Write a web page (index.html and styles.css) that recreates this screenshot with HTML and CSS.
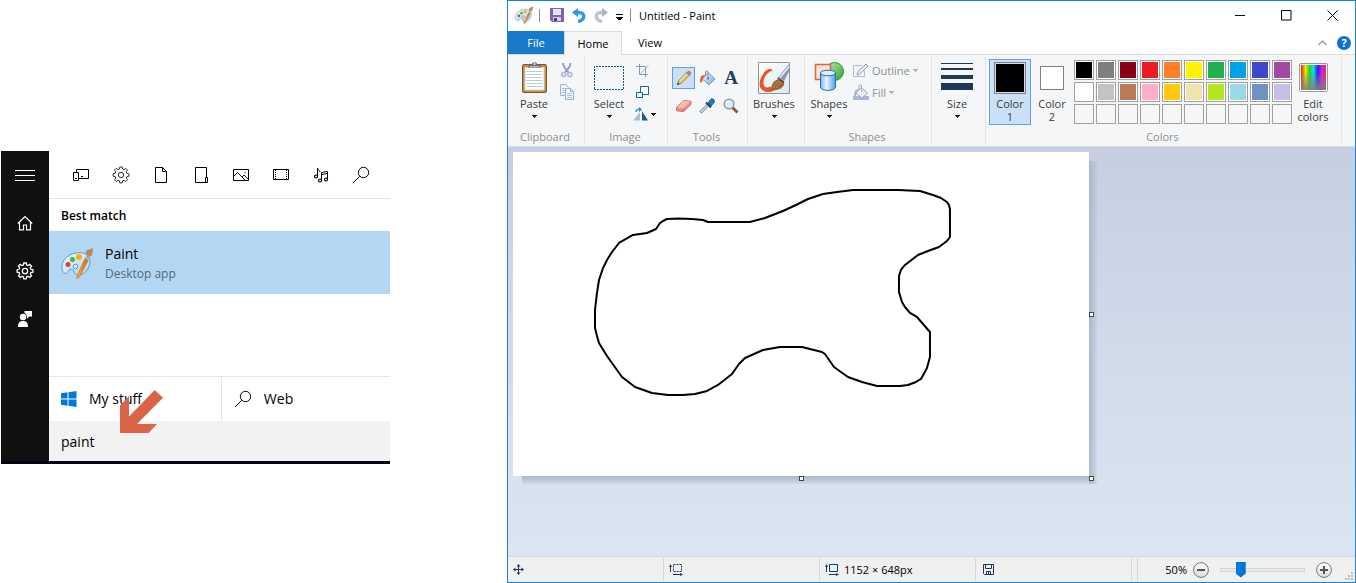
FILE: index.html
```html
<!DOCTYPE html>
<html lang="en">
<head>
<meta charset="utf-8">
<title>Untitled - Paint</title>
<link rel="stylesheet" href="styles.css">
</head>
<body>
<svg class="defs" aria-hidden="true">
  <defs>
    <linearGradient id="wood" x1="0" y1="0" x2="1" y2="0"><stop offset="0" stop-color="#ffa947"/><stop offset="1" stop-color="#d96b0c"/></linearGradient>
    <linearGradient id="pal" x1="0" y1="0" x2="1" y2="1"><stop offset="0" stop-color="#eef9ff"/><stop offset="1" stop-color="#a9d4f3"/></linearGradient>
    <linearGradient id="cyl" x1="0" y1="0" x2="1" y2="0"><stop offset="0" stop-color="#7ab8f0"/><stop offset=".4" stop-color="#e8f5ff"/><stop offset="1" stop-color="#4f9de4"/></linearGradient>
    <linearGradient id="green" x1="0" y1="0" x2="1" y2="1"><stop offset="0" stop-color="#c2ecb5"/><stop offset="1" stop-color="#27a02b"/></linearGradient>
    <linearGradient id="rainbow" x1="0" y1="0" x2="1" y2="0"><stop offset="0" stop-color="#f31a1a"/><stop offset=".18" stop-color="#f8e400"/><stop offset=".34" stop-color="#12dd1c"/><stop offset=".5" stop-color="#14dce8"/><stop offset=".67" stop-color="#2020ee"/><stop offset=".85" stop-color="#e818dd"/><stop offset="1" stop-color="#f0204a"/></linearGradient>
    <linearGradient id="fade" x1="0" y1="0" x2="0" y2="1"><stop offset=".25" stop-color="#808080" stop-opacity="0"/><stop offset="1" stop-color="#808080" stop-opacity=".9"/></linearGradient>
    <linearGradient id="bucket" x1="0" y1="0" x2="1" y2="1"><stop offset="0" stop-color="#fff"/><stop offset="1" stop-color="#6ba4d8"/></linearGradient>
    <linearGradient id="tile" x1="0" y1="0" x2="1" y2="1"><stop offset="0" stop-color="#fff"/><stop offset="1" stop-color="#d9e9f4"/></linearGradient>
    <linearGradient id="knob" x1="0" y1="0" x2="0" y2="1"><stop offset="0" stop-color="#fff"/><stop offset="1" stop-color="#dcdcdc"/></linearGradient>
  </defs>
  <symbol id="gear" viewBox="0 0 18 18">
    <path d="M7.800 1h2.400l.4 2 1.400.6 1.800-1.200 1.700 1.700-1.200 1.800.6 1.400 2 .5v2.400l-2 .4-.6 1.400 1.200 1.800-1.700 1.700-1.800-1.200-1.400.6-.4 2H7.800l-.4-2-1.400-.6-1.800 1.200-1.700-1.700L3.700 12l-.6-1.400-2-.4V7.800l2-.5.6-1.400L2.500 4.100l1.700-1.700L6 3.600 7.400 3z" fill="none" stroke="currentColor"/>
    <circle cx="9" cy="9" r="2.700" fill="none" stroke="currentColor"/>
  </symbol>
  <symbol id="search" viewBox="0 0 18 18">
    <circle cx="11.500" cy="6.500" r="5.200" fill="none" stroke="currentColor"/>
    <path d="M7.700 10.300 1 17" fill="none" stroke="currentColor"/>
  </symbol>
  <symbol id="palette" viewBox="0 0 32 32">
    <path d="M1 22C0 14 6 7.500 15 6c8-1.500 14 2 14 8 0 8-6 14-12 14-5 0-3-6-7-6-3 0-3 5-5.500 4.500C2.500 26 1.300 24 1 22z" fill="url(#pal)" stroke="#5d9fc9"/>
    <circle cx="7" cy="17.500" r="2.500" fill="#e53d2d"/><circle cx="11.500" cy="12.500" r="2.500" fill="#4eb239"/><circle cx="18" cy="10" r="3" fill="#ffab12"/><circle cx="14.500" cy="19.500" r="2.300" fill="#d9edfb" stroke="#5296cc"/>
    <path d="M24 11.500 27 13.500 18.500 30 15.800 31.500 16.300 28z" fill="url(#wood)" stroke="#c6691b" stroke-width=".6"/>
    <path d="m24.300 11 1.600-3 3.600 1.700-2.300 3.300z" fill="#8db4c8"/>
    <path d="M25.300 8c-1.500-3 0-5 2.500-5.500L32 1c-.500 4.500 0 7-3 8.500z" fill="#b58a5e"/>
  </symbol>
  <symbol id="down" viewBox="0 0 5 3"><path d="M0 0h5v1H4v1H3v1H2V2H1V1H0z" fill="currentColor"/></symbol>
</svg>

<main class="desktop">
  <section class="start" aria-label="Search">
    <div class="start-main">
      <nav class="rail" aria-label="Start">
        <button type="button" aria-label="Menu"><svg width="20" height="12" viewBox="0 0 20 12"><path d="M0 1.500h20M0 6.500h20M0 11.500h20" stroke="currentColor"/></svg></button>
        <button type="button" aria-label="Home"><svg width="16" height="16" viewBox="0 0 16 16"><path d="M.8 8.500 8 1.500l7.200 7M2.500 7.500v7.300h4V10h3v4.800h4V7.500" fill="none" stroke="currentColor" stroke-width="1.200"/></svg></button>
        <button type="button" aria-label="Settings"><svg class="bold" width="18" height="18"><use href="#gear"/></svg></button>
        <button type="button" aria-label="Feedback"><svg width="16" height="16" viewBox="0 0 16 16" fill="currentColor"><circle cx="6" cy="6" r="3.200"/><path d="M1 16c0-4 1.500-6 5-6s5 2 5 6zM7.500 0H15v5.500h-3L10 8V5.500h-.3C9.500 3.500 8.800 2.500 7.500 2z"/></svg></button>
      </nav>
      <div class="panel">
        <div class="filters">
          <button type="button" aria-label="Apps"><svg width="18" height="14" viewBox="0 0 18 14"><path d="M4.500 4V1.500h12v9H6.500M1.500 4.500h5v8h-5zM3 10.500h2M9 8.500h2" fill="none" stroke="currentColor"/></svg></button>
          <button type="button" aria-label="Settings"><svg class="light" width="18" height="18"><use href="#gear"/></svg></button>
          <button type="button" aria-label="Documents"><svg width="14" height="16" viewBox="0 0 14 16"><path d="M1.500.5h7l4 4v11h-11zM8.500.5v4h4" fill="none" stroke="currentColor"/></svg></button>
          <button type="button" aria-label="Folders"><svg width="14" height="18" viewBox="0 0 14 18"><path d="M12.500 11V1.500h-11v15h10.500M11.500 11.500h2v5h-2z" fill="none" stroke="currentColor"/></svg></button>
          <button type="button" aria-label="Photos"><svg width="18" height="14" viewBox="0 0 18 14"><path d="M1.500 1.500h15v11h-15z" fill="none" stroke="currentColor"/><path d="m2 8 3.500-3.500 8 8M10 9l2-2 4.500 4.500M12.500 4.500h1" fill="none" stroke="currentColor" stroke-width=".9"/></svg></button>
          <button type="button" aria-label="Videos"><svg width="18" height="14" viewBox="0 0 18 14"><path d="M1.500 1.500h15v10h-15z" fill="none" stroke="currentColor"/><path d="M3.500 2v10M14.500 2v10" stroke="currentColor" stroke-dasharray="1 1"/></svg></button>
          <button type="button" aria-label="Music"><svg width="16" height="16" viewBox="0 0 16 16"><path d="M4.500 9.500V1c0 2 2.500 2 2.500 4M8.500 13V5.500l6-1V12M8.500 7.500l6-1" fill="none" stroke="currentColor"/><g fill="none" stroke="currentColor" stroke-width="1.200"><circle cx="3" cy="9.500" r="1.500"/><circle cx="7" cy="13.500" r="1.500"/><circle cx="13" cy="12.500" r="1.500"/></g></svg></button>
          <button type="button" aria-label="Web search"><svg width="18" height="18"><use href="#search"/></svg></button>
        </div>
        <h2 class="best">Best match</h2>
        <button type="button" class="result">
          <svg width="32" height="32"><use href="#palette"/></svg>
          <span class="result-text"><span>Paint</span><small>Desktop app</small></span>
        </button>
        <div class="scopes">
          <button type="button" class="mine"><svg width="16" height="16" viewBox="0 0 16 16" fill="#0078d7"><path d="M0 2.300 6.500 1.300V7.500H0zM7.500 1.200 15.500 0v7.500h-8zM0 8.500h6.500v6.200L0 13.700zM7.500 8.500h8V16l-8-1.200z"/></svg>My stuff</button>
          <button type="button"><svg width="18" height="18"><use href="#search"/></svg>Web</button>
        </div>
        <input class="query" type="text" value="paint" aria-label="Search text">
        <svg class="pointer" width="43" height="43" viewBox="0 0 43 43" aria-hidden="true"><path d="M0 15.500 9 6v20.500L34.700 0 43 7.800 17 34h20l-8.500 9H0z" fill="#da6446"/></svg>
      </div>
    </div>
    <div class="taskbar"></div>
  </section>

  <section class="paint" aria-label="Paint">
    <header class="titlebar">
      <svg width="18" height="18"><use href="#palette"/></svg>
      <i class="bar"></i>
      <button type="button" aria-label="Save"><svg width="14" height="14" viewBox="0 0 14 14"><path d="M0 0h14v14H2L0 12z" fill="#7f62b0"/><path d="M3 1h8v6H3z" fill="#f4f2f8"/><path d="M3 3h8M3 5h8" stroke="#d8d0e6"/><path d="M3 9h8v4H3z" fill="#d8d0e6"/><path d="M4 10h3v3H4z" fill="#4f387c"/></svg></button>
      <button type="button" aria-label="Undo"><svg width="14" height="15" viewBox="0 0 14 15"><path d="M2 4.500h5c6.500 0 6.500 7.500-1 9" fill="none" stroke="#2b9be6" stroke-width="3.400"/><path d="M0 4.500 6 0v9z" fill="#2b9be6"/></svg></button>
      <button type="button" aria-label="Redo"><svg width="14" height="15" viewBox="0 0 14 15"><path d="M12 4.500H7c-6.500 0-6.500 7.500 1 9" fill="none" stroke="#b9c3d5" stroke-width="3.400"/><path d="M14 4.500 8 0v9z" fill="#a8b4ca"/></svg></button>
      <button type="button" class="customize" aria-label="Customize toolbar"><svg width="7" height="6" viewBox="0 0 7 6"><path d="M0 0h7v1H0zM0 3h7v1H6v1H5v1H2V5H1V4H0z"/></svg></button>
      <i class="bar"></i>
      <h1>Untitled - Paint</h1>
      <div class="controls">
        <button type="button" aria-label="Minimize"><svg width="11" height="11" viewBox="0 0 11 11"><path d="M0 5.500h10" stroke="#000"/></svg></button>
        <button type="button" aria-label="Maximize"><svg width="11" height="11" viewBox="0 0 11 11"><path d="M.5.5h9.500v9.500H.5z" fill="none" stroke="#000"/></svg></button>
        <button type="button" aria-label="Close"><svg width="11" height="11" viewBox="0 0 11 11"><path d="m.5.5 10 10m0-10-10 10" stroke="#000"/></svg></button>
      </div>
    </header>
    <nav class="tabs">
      <button type="button" class="file">File</button>
      <button type="button" class="home">Home</button>
      <button type="button" class="view">View</button>
      <button type="button" class="collapse" aria-label="Collapse ribbon"><svg width="9" height="6" viewBox="0 0 9 6"><path d="M.5 5 4.500 1l4 4" fill="none" stroke="#9a9a9a" stroke-width="1.300"/></svg></button>
      <button type="button" class="help" aria-label="Help">?</button>
    </nav>

    <div class="ribbon">
      <section class="group clipboard">
        <div class="tools">
          <button type="button" class="big"><svg width="32" height="32" viewBox="0 0 32 32"><rect x="4.500" y="2.500" width="24" height="28" rx="1.500" fill="#c58c48" stroke="#80572b"/><path d="M7 5.500h19V28H7z" fill="#fff" stroke="#dbd5cc"/><path d="M8.500 9.500h16M8.500 12.500h16M8.500 15.500h16M8.500 18.500h16M8.500 21.500h16M8.500 24.500h16" stroke="#b9cade"/><path d="M9.500 5.500 11 3.500l2.500-1c1-3 5-3 6 0l2.500 1 1.500 2z" fill="#6c6c6c"/><path d="M12 4.500h9" stroke="#b7b7b7"/><circle cx="16.500" cy="2" r="1" fill="#f3f3f3"/></svg><span>Paste</span><svg class="arrow"><use href="#down"/></svg></button>
          <div class="stack">
            <button type="button" aria-label="Cut"><svg width="14" height="16" viewBox="0 0 14 16"><path d="M3 1c0 4 3 6 5.500 9.500M10.500 1c0 4-3 6-5.500 9.500" fill="none" stroke="#8b9cb6" stroke-width="1.700"/><circle cx="3.700" cy="12.500" r="2" fill="none" stroke="#a6b7d4" stroke-width="1.600"/><circle cx="9.800" cy="12.500" r="2" fill="none" stroke="#a6b7d4" stroke-width="1.600"/></svg></button>
            <button type="button" aria-label="Copy"><svg width="16" height="16" viewBox="0 0 16 16"><path d="M1.500.5h5l3 3v8h-8z" fill="#f2f6fc" stroke="#9eb1d0"/><path d="M3 4.500h3M3 6.500h4M3 8.500h4" stroke="#b5c4dc"/><path d="M6.500 4.500h5l3 3v8h-8zM11.500 4.500v3h3" fill="#f2f6fc" stroke="#9eb1d0"/><path d="M8 9.500h5M8 11.500h5M8 13.500h5" stroke="#aebfd9"/></svg></button>
          </div>
        </div>
        <h3>Clipboard</h3>
      </section>

      <section class="group image">
        <div class="tools">
          <button type="button" class="big"><svg width="32" height="32" viewBox="0 0 32 32"><path d="M1.500 27V4.500h29v23h-29" fill="none" stroke="#12588f" stroke-dasharray="2 1"/></svg><span>Select</span><svg class="arrow"><use href="#down"/></svg></button>
          <div class="stack">
            <button type="button" aria-label="Crop"><svg width="13" height="13" viewBox="0 0 13 13"><path d="M3.500 0v10.500H12M0 2.500h9.500V13" fill="none" stroke="#8499b4"/><path d="M4.500 9.500 12.500 1" stroke="#a5b5cb"/></svg></button>
            <button type="button" aria-label="Resize"><svg width="13" height="13" viewBox="0 0 13 13"><path d="M4.500.5h8v8h-8z" fill="#fff" stroke="#1d5b96"/><path d="M.5 6.500h6v5h-6z" fill="#e4f2ff" stroke="#1d5b96"/></svg></button>
            <button type="button" class="rotate" aria-label="Rotate"><svg width="16" height="14" viewBox="0 0 16 14"><path d="M7 5v8.500H0z" fill="#aebfcd"/><path d="M9 4v9.500h6z" fill="#185e96"/><path d="M3 5C3 3 4 2 7 2.500" fill="none" stroke="#2385d2" stroke-width="1.300"/><path d="M6 0v5l3-2.500z" fill="#2385d2"/></svg><svg class="arrow"><use href="#down"/></svg></button>
          </div>
        </div>
        <h3>Image</h3>
      </section>

      <section class="group toolset">
        <div class="tools tool-grid">
          <button type="button" class="chosen" aria-label="Pencil"><svg width="16" height="16" viewBox="0 0 16 16"><path d="m1.500 14.500 1.300-4L11.500 2 14 4.500 5.500 13z" fill="#f6d05c" stroke="#71643a" stroke-width=".8"/><path d="m4 10.500 8-8" stroke="#fff3a9"/><path d="m11 2.500 1-1c1.500-1 3.500 1 2.500 2.500l-1 1z" fill="#cf7473" stroke="#a55" stroke-width=".5"/><path d="m10.500 3 2.500 2.500" stroke="#7c8792"/><path d="m1 15 .8-2.500 1.700 1.700z" fill="#333"/></svg></button>
          <button type="button" aria-label="Fill with color"><svg width="17" height="16" viewBox="0 0 17 16"><path d="M9 2.500 16 9l-6 6-6.500-6z" fill="url(#bucket)" stroke="#7d9cba"/><path d="M9 8V2c0-1.500-2.500-1.500-2.500 0v3" fill="none" stroke="#8a8a8a"/><path d="M6.500 5.500C2 4 .5 8 1.500 13l2-1.500C3 9 4 7.500 6.500 5.500z" fill="#e05d20"/><circle cx="9" cy="8.500" r="1" fill="#536d86"/></svg></button>
          <button type="button" class="text-tool" aria-label="Text">A</button>
          <button type="button" aria-label="Eraser"><svg width="16" height="14" viewBox="0 0 16 14"><path d="m.5 8.500 7.500-7 7 .8v3.200l-7.500 7-7-.8z" fill="#ef8c87" stroke="#c26e6b"/><path d="m1 8.500 6.500.8 7-6.800L8 1.500z" fill="#f9b7b0"/><path d="M7.500 9.500v2.500" stroke="#c96c68"/></svg></button>
          <button type="button" aria-label="Color picker"><svg width="16" height="16" viewBox="0 0 16 16"><path d="M1.500 14.500 9 7" stroke="#5d8097" stroke-width="3"/><path d="M2 14l7-7" stroke="#d8edf8" stroke-width="1.500"/><path d="M7 4.500 12 9.500" stroke="#114a7e" stroke-width="2"/><path d="m9 5 2.500-3.500c1.500-2 5 .5 3.500 3L12 8z" fill="#2c78bd" stroke="#13558d"/></svg></button>
          <button type="button" aria-label="Magnifier"><svg width="16" height="16" viewBox="0 0 16 16"><path d="m9.500 9.500 5 5" stroke="#8b5d36" stroke-width="3"/><circle cx="6" cy="6" r="4.800" fill="#d9efff" stroke="#8f9baa" stroke-width="1.500"/><path d="M3.500 6c0-1.500 1-2.500 2.500-2.500" fill="none" stroke="#fff" stroke-width="1.300"/></svg></button>
        </div>
        <h3>Tools</h3>
      </section>

      <section class="group brushes">
        <div class="tools">
          <button type="button" class="big"><svg width="32" height="32" viewBox="0 0 32 32"><path d="M.5.5h31v31H.5z" fill="url(#tile)" stroke="#909699"/><path d="M13.500 8.500c-1-2-4-1-6.500 1.500C1 16-.5 25 5 28.500c4 2.500 9 2 11-1l-4-3c-3 2-6 1-6.500-3C5 17 8 11.500 13.500 8.500z" fill="#e75624"/><path d="M6 11c2-3 5-4 7.500-3.500l.5 2" fill="none" stroke="#e75624"/><path d="m20 15.500 11-13.500v7.500L26 19z" fill="#8898b0"/><path d="m22 15.500 9-11" stroke="#e5ecf5" stroke-width="1.800"/><path d="M11.500 29.500c2.500-3 1.500-6.500 4-9.500 2.500-2.500 6.500-4 9.500-1.500 2 2 1.500 4.500-.5 6.500-3 3.500-8.500 3-13 4.500z" fill="#98672f"/><path d="M15.500 26c1-3.500 3-6 7-7M18 26c2-2 3-4.500 6-5.500" stroke="#c18f52" fill="none"/><path d="m19.500 16 6.500 4.500" stroke="#5d3b20" stroke-width="1.300"/></svg><span>Brushes</span><svg class="arrow"><use href="#down"/></svg></button>
        </div>
      </section>

      <section class="group shapes">
        <div class="tools">
          <button type="button" class="big"><svg width="32" height="32" viewBox="0 0 32 32"><circle cx="21.500" cy="9.500" r="9" fill="url(#green)" stroke="#289238"/><path d="M2.500 2.500h15v15h-15z" fill="#fce1d5" stroke="#e26339" stroke-width="1.500"/><path d="M7.500 11v14c0 4.500 15 4.500 15 0V11" fill="url(#cyl)" stroke="#236fb4"/><ellipse cx="15" cy="11" rx="7.500" ry="2.800" fill="#d9efff" stroke="#236fb4"/></svg><span>Shapes</span><svg class="arrow"><use href="#down"/></svg></button>
          <div class="stack">
            <button type="button" class="wide" disabled><svg width="16" height="16" viewBox="0 0 16 16"><path d="M9 3.500H.5v11h11V9" fill="none" stroke="#b0bccd"/><path d="m4 13 1-3.500L13 2l2 2-8 8z" fill="#e6edf6" stroke="#8fa0b8"/></svg>Outline<svg class="arrow"><use href="#down"/></svg></button>
            <button type="button" class="wide" disabled><svg width="16" height="16" viewBox="0 0 16 16"><path d="M0 12h16v4H0z" fill="#a9bad2"/><path d="M8 3.500 14.500 9 9 14 3 9z" fill="#edf2f9" stroke="#93a3bb"/><path d="M8.500 8V2C8.500.5 6 .5 6 2v4" fill="none" stroke="#9dadc5"/><path d="M5.500 5C2 5 1 8 1 12h2c0-3 1-5 3-6z" fill="#a5b5cd"/></svg>Fill<svg class="arrow"><use href="#down"/></svg></button>
          </div>
        </div>
        <h3>Shapes</h3>
      </section>

      <section class="group size">
        <div class="tools">
          <button type="button" class="big"><svg width="32" height="32" viewBox="0 0 32 32"><path d="M0 1h32v1H0zM0 6h32v2H0zM0 13h32v4H0zM0 21h32v7H0z" fill="#1f3759"/></svg><span>Size</span><svg class="arrow"><use href="#down"/></svg></button>
        </div>
      </section>

      <section class="group colors">
        <div class="tools">
          <button type="button" class="color chosen"><i class="well first"></i><span>Color<br>1</span></button>
          <button type="button" class="color"><i class="well second"></i><span>Color<br>2</span></button>
          <div class="swatches">
            <button type="button" class="k1" aria-label="Black"></button><button type="button" class="k2" aria-label="Gray-50%"></button><button type="button" class="k3" aria-label="Dark red"></button><button type="button" class="k4" aria-label="Red"></button><button type="button" class="k5" aria-label="Orange"></button><button type="button" class="k6" aria-label="Yellow"></button><button type="button" class="k7" aria-label="Green"></button><button type="button" class="k8" aria-label="Turquoise"></button><button type="button" class="k9" aria-label="Indigo"></button><button type="button" class="k10" aria-label="Purple"></button>
            <button type="button" class="k11" aria-label="White"></button><button type="button" class="k12" aria-label="Gray-25%"></button><button type="button" class="k13" aria-label="Brown"></button><button type="button" class="k14" aria-label="Rose"></button><button type="button" class="k15" aria-label="Gold"></button><button type="button" class="k16" aria-label="Light yellow"></button><button type="button" class="k17" aria-label="Lime"></button><button type="button" class="k18" aria-label="Light turquoise"></button><button type="button" class="k19" aria-label="Blue-gray"></button><button type="button" class="k20" aria-label="Lavender"></button>
            <button type="button" class="none" aria-label="Custom 1"></button><button type="button" class="none" aria-label="Custom 2"></button><button type="button" class="none" aria-label="Custom 3"></button><button type="button" class="none" aria-label="Custom 4"></button><button type="button" class="none" aria-label="Custom 5"></button><button type="button" class="none" aria-label="Custom 6"></button><button type="button" class="none" aria-label="Custom 7"></button><button type="button" class="none" aria-label="Custom 8"></button><button type="button" class="none" aria-label="Custom 9"></button><button type="button" class="none" aria-label="Custom 10"></button>
          </div>
          <button type="button" class="color edit"><svg width="32" height="32" viewBox="0 0 32 32"><rect x="2.500" y="1.500" width="28" height="28" rx="1" fill="#fff" stroke="#999"/><path d="M4 3h25v25H4z" fill="url(#rainbow)"/><path d="M4 3h25v25H4z" fill="url(#fade)"/></svg><span>Edit<br>colors</span></button>
        </div>
        <h3>Colors</h3>
      </section>
    </div>

    <div class="workspace">
      <div class="canvas">
        <svg class="drawing" viewBox="0 0 576 324" role="img" aria-label="Freehand outline"><path d="M82 176V158L84 141 86 128 90 116 94 108 99 100 106 91 113 87 120 83 134 81 143 77 147 71 150 69 154 67 166 66.500 179 67 190 68 195 70H237L252 66 270 59 283 53 295 47 310 42 324 40 340 38H385L407 39 420 43 428 46 434 50 436 53 437 57V85L434 89 426 95 415 99 405 103 392 113 388 118 386 124V140L389 150 392 155 397 161 404 165 417 180V205L414 216 408 227 403 230 395 233 387 234H364L349 230 335 225 321 215 312 202 309 200 289 195H267L250 198 232 206 226 212 219 222 205 233 194 239 182 242 170 243 155 243 139 241 122 235 109 225 94 204 86 191 84 184z" fill="none" stroke="#000" stroke-width="2" stroke-linejoin="round"/></svg>
        <i class="handle east"></i><i class="handle south"></i><i class="handle corner"></i>
      </div>
    </div>

    <footer class="status">
      <div class="cell"><svg width="12" height="12" viewBox="0 0 12 12"><path d="M5.500 1v9M1 5.500h9" stroke="#1f3759"/><path d="m3.500 2.500 2-2.500 2 2.500zM3.500 8.500l2 2.500 2-2.500zM2.500 3.500 0 5.500l2.500 2zM8.500 3.500l2.500 2-2.500 2z" fill="#1f3759"/></svg></div>
      <div class="cell"><svg width="14" height="12" viewBox="0 0 14 12"><path d="M1.500 1v7M4 10.500h8" stroke="#1f3759"/><path d="m0 3 1.500-3L3 3zM11 9l3 1.500-3 1.500z" fill="#1f3759"/><path d="M4.500.5h8v7h-8z" fill="none" stroke="#1f3759" stroke-dasharray="2 1"/></svg></div>
      <div class="cell"><svg width="14" height="12" viewBox="0 0 14 12"><path d="M1.500 1v7M4 10.500h8" stroke="#1f3759"/><path d="m0 3 1.500-3L3 3zM11 9l3 1.500-3 1.500z" fill="#1f3759"/><path d="M4.500.5h8v7h-8z" fill="#e7f1fc" stroke="#1f3759"/></svg><span>1152 × 648px</span></div>
      <div class="cell disk"><svg width="12" height="12" viewBox="0 0 12 12"><path d="M.5.500h10v10h-9l-1-1zM2.500.5v4h6v-4M3.500 10.500v-3h4v3M5.500 8v2" fill="none" stroke="#1f3759"/></svg></div>
      <div class="cell gap"></div>
      <div class="zoom">
        <label for="zoom">50%</label>
        <button type="button" aria-label="Zoom out"><svg width="16" height="16" viewBox="0 0 16 16"><circle cx="8" cy="8" r="7.400" fill="url(#knob)" stroke="#777"/><path d="M4 8h8" stroke="#555" stroke-width="2"/></svg></button>
        <input id="zoom" type="range" min="0" max="100" value="21">
        <button type="button" aria-label="Zoom in"><svg width="16" height="16" viewBox="0 0 16 16"><circle cx="8" cy="8" r="7.400" fill="url(#knob)" stroke="#777"/><path d="M4 8h8M8 4v8" stroke="#555" stroke-width="2"/></svg></button>
      </div>
      <svg class="grip" width="8" height="8" viewBox="0 0 8 8"><path d="M6 0h2v2H6zM3 3h2v2H3zM6 3h2v2H6zM0 6h2v2H0zM3 6h2v2H3zM6 6h2v2H6z" fill="#bfbfbf"/></svg>
    </footer>
  </section>
</main>
</body>
</html>
```
FILE: styles.css
```css
* { box-sizing: border-box; }

body {
  margin: 0;
  background: #fff;
  color: #000;
  font: 11px/13px "Open Sans", "Noto Sans", sans-serif;
}

button {
  display: flex;
  align-items: center;
  justify-content: center;
  margin: 0;
  padding: 0;
  border: 0;
  background: none;
  color: inherit;
  font: inherit;
}

h1, h2, h3 { margin: 0; font: inherit; }
svg { display: block; flex: none; }
.defs { position: absolute; width: 0; height: 0; }

.desktop {
  display: grid;
  grid-template-columns: minmax(330px, 389fr) minmax(0, 117fr) minmax(0, 849fr);
  min-height: 100vh;
  padding-left: 1px;
}

/* Start menu search */
.start { padding-top: 151px; }
.start-main { display: flex; }
.taskbar { height: 3px; background: #020812; }

.rail { width: 48px; background: #101010; color: #fff; }
.rail button { width: 100%; height: 48px; }
.bold { stroke-width: 1.3; }
.light { stroke-width: 0.8; }

.panel {
  position: relative;
  display: flex;
  flex: 1;
  flex-direction: column;
  font-size: 14px;
  line-height: 20px;
}

.filters { display: flex; padding-left: 12px; border-bottom: 1px solid #e5e5e5; }
.filters button { width: 40px; height: 47px; }
.best { padding: 7px 12px 5px; font-size: 12px; font-weight: 600; }

.result {
  justify-content: flex-start;
  gap: 12px;
  height: 63px;
  margin-bottom: 82px;
  padding: 0 12px;
  background: #b3d6f2;
  text-align: left;
}
.result-text { display: flex; flex-direction: column; padding-top: 2px; }
.result small { color: #54697a; font-size: 12px; }

.scopes { display: flex; border-top: 1px solid #e5e5e5; }
.scopes button { flex: 169; justify-content: flex-start; gap: 12px; height: 44px; padding-left: 12px; }
.scopes .mine { flex-grow: 173; border-right: 1px solid #e5e5e5; }

.query {
  width: 100%;
  height: 40px;
  padding: 0 12px;
  border: 0;
  background: #f2f2f2;
  font: inherit;
}
.pointer { position: absolute; right: 227px; bottom: 28px; }

/* Paint window */
.paint {
  display: flex;
  flex-direction: column;
  grid-column: 3;
  border: 1px solid #1883d7;
}

.titlebar { display: flex; align-items: center; height: 30px; padding: 0 0 2px 7px; }
.titlebar > button { width: 22px; height: 22px; }
.titlebar h1 { margin-left: 8px; white-space: nowrap; }
.bar { width: 1px; height: 13px; margin: 0 6px; background: #8c8c8c; }
.titlebar > .customize { width: 14px; padding-top: 4px; }
.customize + .bar { margin: 0 0 0 4px; }
.controls { display: flex; margin-left: auto; }
.controls button { width: 46px; height: 28px; }

.tabs { display: flex; align-items: stretch; height: 24px; border-bottom: 1px solid #dadbdc; }
.file { width: 56px; background: #1979ca; color: #fff; }
.home { width: 58px; margin-bottom: -1px; padding-bottom: 1px; border: 1px solid #dadbdc; border-bottom: 0; background: #f5f6f7; }
.view { width: 56px; }
.collapse { width: 14px; margin-left: auto; }
.help {
  align-self: center;
  width: 14px;
  height: 14px;
  margin: 0 4px 0 8px;
  border-radius: 50%;
  background: #0a72cf;
  color: #fff;
  font-weight: 700;
}

.ribbon {
  display: flex;
  height: 92px;
  padding: 2px 0 3px;
  border-bottom: 1px solid #dadbdc;
  background: #f5f6f7;
  color: #3b3b3b;
}

.group {
  display: flex;
  flex: none;
  flex-direction: column;
  justify-content: space-between;
  border-right: 1px solid #e2e3e4;
}
.group h3 { padding-right: 2px; color: #8e8e8e; text-align: center; }
.clipboard { width: 77px; }
.image { width: 83px; }
.toolset { width: 80px; }
.brushes { width: 57px; }
.shapes { width: 127px; }
.size { width: 54px; }
.colors { width: 356px; }

.tools { display: flex; align-items: flex-start; padding: 2px 3px; }
.big { flex-direction: column; width: 46px; padding-top: 3px; }
.big span { margin: 3px 0 5px; }
.image .tools, .brushes .tools { padding-left: 1px; }
.brushes .big, .size .big { width: 50px; }
.shapes .tools { padding-left: 1px; }
.size .tools { padding-left: 0; }
.arrow { width: 5px; height: 3px; color: #1e1e1e; }
.stack { display: flex; flex-direction: column; }
.stack button { width: 20px; height: 22px; }
.stack .rotate { gap: 2px; width: 24px; }
.stack .wide { justify-content: flex-start; gap: 3px; width: auto; color: #8e8e8e; }
.stack .wide .arrow { color: #b0b0b0; }
.shapes .stack { padding-left: 1px; }

.tool-grid {
  display: grid;
  grid-template-columns: 23px 24px 24px;
  grid-auto-rows: 22px;
  gap: 6px 0;
  align-items: stretch;
  padding: 10px 4px;
}
.chosen { background: #c9e0f7; box-shadow: inset 0 0 0 1px #62a2e4; }
.text-tool { color: #1f3c62; font: 700 19px/22px "Liberation Serif", serif; }

.colors .tools { padding: 2px 3px; }
.color { flex-direction: column; justify-content: flex-start; width: 42px; height: 66px; padding-top: 3px; text-align: center; }
.color span { margin-top: 3px; }
.well { display: block; border: 1px solid #808080; }
.first { width: 32px; height: 32px; background: #000; box-shadow: inset 0 0 0 1px #c9e0f7; }
.second { width: 24px; height: 24px; margin: 4px; background: #fff; }
.swatches { display: grid; grid-template-columns: repeat(10, 20px); grid-auto-rows: 20px; gap: 2px; margin: 1px 0 0 1px; }
.swatches button { border: 1px solid #a0a0a0; box-shadow: inset 0 0 0 1px #fff; }
.swatches .none { box-shadow: none; }
.k1 { background: #000; } .k2 { background: #7f7f7f; } .k3 { background: #880015; } .k4 { background: #ed1c24; }
.k5 { background: #ff7f27; } .k6 { background: #fff200; } .k7 { background: #22b14c; } .k8 { background: #00a2e8; }
.k9 { background: #3f48cc; } .k10 { background: #a349a4; } .k11 { background: #fff; } .k12 { background: #c3c3c3; }
.k13 { background: #b97a57; } .k14 { background: #ffaec9; } .k15 { background: #ffc90e; } .k16 { background: #efe4b0; }
.k17 { background: #b5e61d; } .k18 { background: #99d9ea; } .k19 { background: #7092be; } .k20 { background: #c8bfe7; }

.workspace { flex: 1; padding-top: 5px; background: linear-gradient(#c6cfe1, #dce6f2); }
.canvas { position: relative; width: 68%; margin-left: 5px; background: #fff; }
.drawing { width: 100%; height: auto; }
.canvas::before, .canvas::after { content: ""; position: absolute; }
.canvas::before { top: 9px; bottom: -8px; left: 100%; width: 8px; background: linear-gradient(90deg, #a9b6cf, #a9b6cf33); }
.canvas::after { top: 100%; right: 0; left: 9px; height: 8px; background: linear-gradient(#a9b6cf, #a9b6cf33); }
.handle { position: absolute; z-index: 1; width: 5px; height: 5px; border: 1px solid #444; background: #fff; }
.east { top: 50%; left: 100%; margin-top: -2px; }
.south { top: 100%; left: 50%; margin-left: -2px; }
.corner { top: 100%; left: 100%; }

.status { display: flex; height: 26px; border-top: 1px solid #d7d7d7; background: #f0f0f0; }
.cell { display: flex; align-items: center; gap: 5px; flex: 0 1 156px; margin: 1px 0; padding-left: 5px; border-right: 1px solid #d7d7d7; white-space: nowrap; }
.disk { padding-left: 7px; }
.gap { flex-basis: 6px; padding: 0; }
.zoom { display: flex; flex: 1; align-items: center; justify-content: flex-end; gap: 6px; }
.zoom input {
  appearance: none;
  width: 85px;
  height: 18px;
  margin: 0 5px;
  background:
    linear-gradient(#e7eaea, #e7eaea) center / calc(100% - 2px) 2px no-repeat,
    linear-gradient(#d6d6d6, #d6d6d6) center / 100% 4px no-repeat;
}
.zoom input::-webkit-slider-thumb {
  appearance: none;
  width: 10px;
  height: 16px;
  background: #0078d7;
  clip-path: polygon(0 0, 100% 0, 100% 75%, 50% 100%, 0 75%);
}
.grip { align-self: flex-end; margin: 0 2px 2px 13px; }
```
